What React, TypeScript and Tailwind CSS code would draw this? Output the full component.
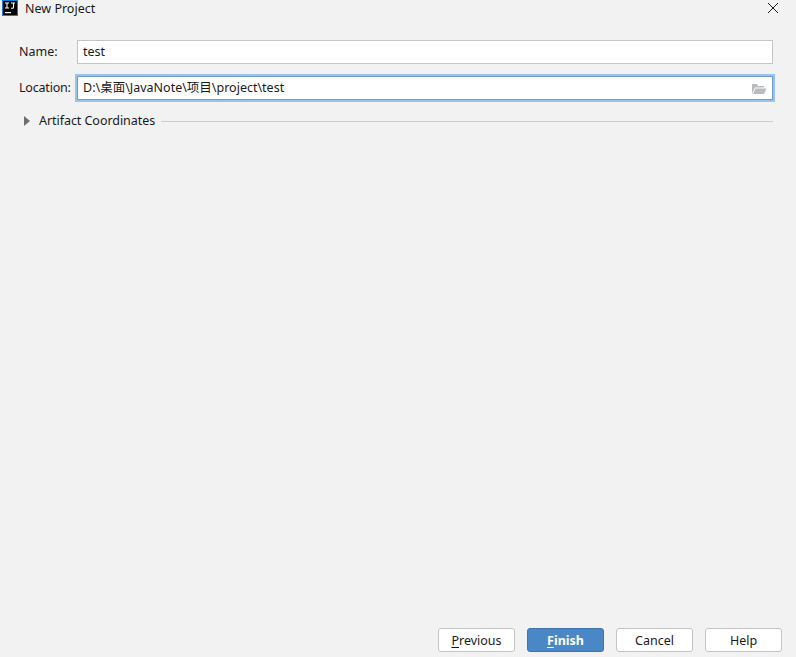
const font = "font-['Noto_Sans','Noto_Sans_CJK_SC',sans-serif]";

function DialogButton({ label, mnemonic, rest }: { label?: string; mnemonic?: string; rest?: string }) {
  return (
    <button className="w-[77px] h-6 pt-[2px] rounded-[3px] border border-[#c4c4c4] bg-white text-[12.5px] leading-none text-[#1a1a1a]">
      {mnemonic && <span className="underline underline-offset-2">{mnemonic}</span>}
      {rest}
      {label}
    </button>
  );
}

export default function App() {
  return (
    <div className={`${font} w-[796px] h-[657px] bg-[#f2f2f2] flex flex-col text-[12.5px] text-[#1a1a1a] overflow-hidden`}>
      {/* Title bar */}
      <div className="h-4 flex items-center pl-[2px] pr-[17px]">
        <svg width="16" height="16" viewBox="0 0 16 16" className="shrink-0">
          <rect width="16" height="16" fill="#000" />
          <rect x="0.5" y="0.5" width="15" height="15" fill="#000" stroke="#0a7fd6" strokeWidth="1" />
          <path d="M3 3h4M5 3v5M3 8h4M9 3h4M11.5 3v4.2q0 1-1 1H9" stroke="#fff" strokeWidth="1.1" fill="none" />
          <rect x="3" y="12" width="6" height="1.2" fill="#fff" />
        </svg>
        <span className="ml-[7px] pt-px text-[12.5px] leading-4">New Project</span>
        <svg width="12" height="12" viewBox="0 0 12 12" className="ml-auto">
          <path d="M1 1l10 10M11 1L1 11" stroke="#1a1a1a" strokeWidth="1" fill="none" />
        </svg>
      </div>

      {/* Form */}
      <div className="flex flex-col pl-[19px] pr-[23px] pt-6">
        <div className="flex items-center h-6">
          <label className="w-[58px]">Name:</label>
          <div className="flex-1 h-6 border border-[#c4c4c4] bg-white flex items-center pl-[5px]">test</div>
        </div>
        <div className="flex items-center h-6 mt-3">
          <label className="w-[58px] pt-px tracking-[-0.2px]">Location:</label>
          <div className="flex-1 h-6 border border-[#6f9bd0] outline-2 outline-[#97c3f0] bg-white flex items-center pl-[5px] pr-[5px]">
            <span className="pt-px">D:\桌面\JavaNote\项目\project\test</span>
            <svg width="16" height="12" viewBox="0 0 16 12" className="ml-auto mt-px">
              <path d="M1 11V1h5l1 2h6v1.5H4L1 11z" fill="#b8bcbf" />
              <path d="M4.5 5.5H15.5L13 11H2z" fill="#b8bcbf" />
            </svg>
          </div>
        </div>
        <div className="flex items-center h-4 mt-[13px]">
          <span className="w-0 h-0 ml-[5px] border-y-[5px] border-y-transparent border-l-[6px] border-l-[#6e6e6e]" />
          <span className="ml-[9px] tracking-[-0.05px]">Artifact Coordinates</span>
          <div className="flex-1 h-px bg-[#cdcdcd] ml-[6px]" />
        </div>
      </div>

      {/* Buttons */}
      <div className="mt-auto flex justify-end gap-3 pr-[14px] pb-[5px]">
        <DialogButton mnemonic="P" rest="revious" />
        <button className="w-[77px] h-6 pt-[2px] rounded-[3px] border border-[#3f74b0] bg-[#4a87c7] text-[12.5px] leading-none font-bold text-white">
          <span className="underline underline-offset-2">F</span>inish
        </button>
        <DialogButton label="Cancel" />
        <DialogButton label="Help" />
      </div>
    </div>
  );
}
